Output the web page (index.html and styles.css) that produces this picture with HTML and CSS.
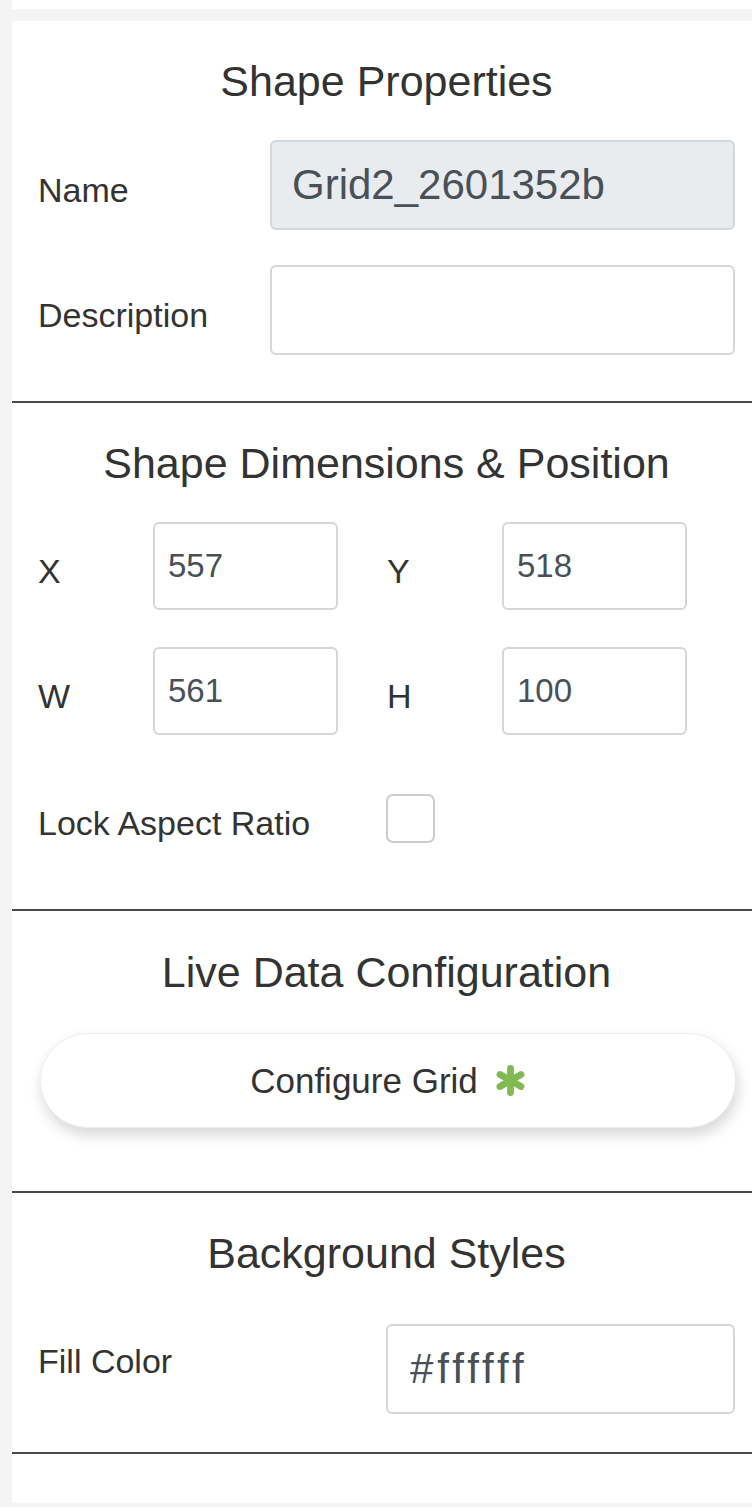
FILE: index.html
```html
<!DOCTYPE html>
<html lang="en">
<head>
<meta charset="utf-8">
<title>Shape Properties</title>
<link rel="stylesheet" href="styles.css">
</head>
<body>
<div class="topbar"></div>
<div class="panel">
  <section class="section s1">
    <h3 class="title">Shape Properties</h3>
    <div class="row">
      <label class="label wide">Name</label>
      <input class="field big readonly" value="Grid2_2601352b" readonly>
    </div>
    <div class="row gap35">
      <label class="label wide">Description</label>
      <input class="field big" value="">
    </div>
  </section>

  <section class="section s2">
    <h3 class="title">Shape Dimensions &amp; Position</h3>
    <div class="pairs">
      <div class="pair"><label class="label short">X</label><input class="field num" value="557"></div>
      <div class="pair"><label class="label short">Y</label><input class="field num" value="518"></div>
    </div>
    <div class="pairs gap37">
      <div class="pair"><label class="label short">W</label><input class="field num" value="561"></div>
      <div class="pair"><label class="label short">H</label><input class="field num" value="100"></div>
    </div>
    <div class="row lock">
      <label class="label col348">Lock Aspect Ratio</label>
      <span class="check"></span>
    </div>
  </section>

  <section class="section s3">
    <h3 class="title">Live Data Configuration</h3>
    <button class="config">
      <span>Configure Grid</span>
      <svg class="ast" viewBox="0 0 32 32" width="31" height="31" aria-hidden="true">
        <g stroke="#80ba52" stroke-width="7" stroke-linecap="round">
          <line x1="16" y1="3.5" x2="16" y2="28.5"/>
          <line x1="5.17" y1="9.75" x2="26.83" y2="22.25"/>
          <line x1="5.17" y1="22.25" x2="26.83" y2="9.75"/>
        </g>
      </svg>
    </button>
  </section>

  <section class="section s4">
    <h3 class="title">Background Styles</h3>
    <div class="row top">
      <label class="label col348 high">Fill Color</label>
      <input class="field big color" value="#ffffff">
    </div>
  </section>
</div>
</body>
</html>
```

FILE: styles.css
```css
html, body {
  margin: 0;
  overflow: hidden;
}

body {
  background: #f4f4f4;
  font-family: "Liberation Sans", Arial, sans-serif;
  color: #333;
}

.topbar {
  margin-left: 12px;
  height: 9px;
  background: #fff;
}

.panel {
  margin: 12px 0 0 12px;
  width: 748px;
  background: #fff;
  padding-bottom: 49px;
}

.section {
  padding: 34px 25px 46px 26px;
  border-bottom: 2px solid #4a4a4a;
}

.s2 { padding-bottom: 66px; }
.s3 { padding-top: 35px; padding-bottom: 63px; }
.s4 { padding-bottom: 38px; }

.title {
  margin: 0 0 33px;
  font-size: 43px;
  line-height: 52px;
  font-weight: 400;
  text-align: center;
  color: #333;
}

.s3 .title { margin-bottom: 35px; }
.s4 .title { margin-bottom: 45px; }

.row {
  display: flex;
  align-items: center;
}

.row.top { align-items: flex-start; }

.gap35 { margin-top: 35px; }
.gap37 { margin-top: 37px; }

.label {
  flex: none;
  font-size: 34px;
  line-height: 40px;
  margin-top: 10px;
  color: #333;
}

.label.wide { width: 232px; }
.label.short { width: 115px; }
.label.col348 { width: 348px; }
.label.high { margin-top: 17px; }

.field {
  box-sizing: border-box;
  flex: 1;
  min-width: 0;
  margin: 0;
  border: 2px solid #d3d6da;
  border-radius: 6px;
  background: #fff;
  font-family: inherit;
  color: #495057;
  outline: none;
}

.field.big {
  height: 90px;
  padding: 0 20px;
  font-size: 42px;
}

.field.readonly { background: #e9ecef; }

.field.color {
  padding-left: 22px;
  letter-spacing: 4px;
}

.pairs {
  display: flex;
  gap: 49px;
}

.pair {
  display: flex;
  align-items: center;
  width: 300px;
}

.field.num {
  flex: none;
  width: 185px;
  height: 88px;
  padding: 0 13px;
  font-size: 33px;
}

.lock { margin-top: 58px; }

.check {
  box-sizing: border-box;
  width: 49px;
  height: 49px;
  border: 2px solid #ccc;
  border-radius: 7px;
  background: #fff;
}

.config {
  display: flex;
  align-items: center;
  justify-content: center;
  gap: 17px;
  box-sizing: border-box;
  width: 696px;
  height: 95px;
  margin-left: 2px;
  padding: 0;
  border: 1px solid #eee;
  border-radius: 48px;
  background: #fff;
  box-shadow: 2px 7px 14px rgba(0, 0, 0, 0.16);
  font-family: inherit;
  font-size: 35px;
  color: #333;
}

.ast { display: block; }
```
